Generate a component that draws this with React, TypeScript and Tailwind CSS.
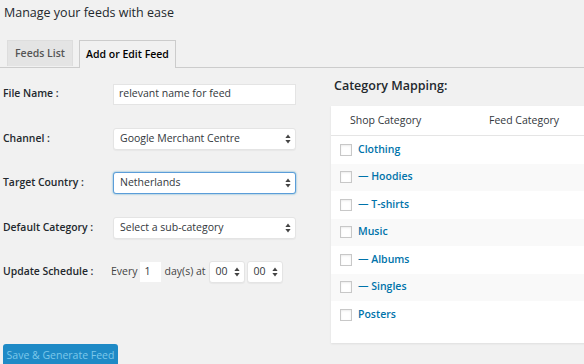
import React from "react"

const font = { fontFamily: '"Open Sans", "Liberation Sans", sans-serif' }

function Arrows() {
  return (
    <svg width="6" height="10" viewBox="0 0 6 10" className="shrink-0">
      <path d="M3 0.5 L5.6 4 L0.4 4 Z" fill="#444" />
      <path d="M3 9.5 L5.6 6 L0.4 6 Z" fill="#444" />
    </svg>
  )
}

function Select({ value, focused = false, className = "" }: { value: string; focused?: boolean; className?: string }) {
  return (
    <div
      className={
        "flex h-[22px] items-center justify-between rounded-[3px] bg-white pl-[6px] pr-[4px] text-[10.5px] text-[#32373c] " +
        (focused
          ? "border border-[#5b9dd9] shadow-[0_0_2px_rgba(30,140,190,0.8)] "
          : "border border-[#e4e4e4] shadow-[0_1px_1px_rgba(0,0,0,0.04)] ") +
        className
      }
    >
      <span>{value}</span>
      <Arrows />
    </div>
  )
}

function Row({ label, children }: { label: string; children: React.ReactNode }) {
  return (
    <div className="flex h-[22px] items-center">
      <div className="w-[113px] pl-[3px] text-[10.4px] font-semibold text-[#23282d]">{label}</div>
      {children}
    </div>
  )
}

const categories = [
  { name: "Clothing", sub: false },
  { name: "Hoodies", sub: true },
  { name: "T-shirts", sub: true },
  { name: "Music", sub: false },
  { name: "Albums", sub: true },
  { name: "Singles", sub: true },
  { name: "Posters", sub: false },
]

export default function App() {
  return (
    <div className="h-[364px] w-[584px] overflow-hidden bg-[#f1f1f1]" style={font}>
      <div className="pl-[4px] pt-[3px] text-[12.5px] leading-[20px] text-[#23282d]">Manage your feeds with ease</div>

      <div className="mt-[17px] flex items-end gap-[6px] border-b border-[#ccc] pl-[7px]">
        <div className="mb-[1px] flex h-[26px] w-[66px] items-center justify-center border border-b-0 border-[#ddd] bg-[#e4e4e4] text-[10.5px] font-semibold text-[#555]">
          Feeds List
        </div>
        <div className="-mb-px flex h-[28px] w-[97px] items-center justify-center border border-b-0 border-[#ccc] bg-[#f1f1f1] text-[10.5px] font-semibold text-[#000]">
          Add or Edit Feed
        </div>
      </div>

      <div className="flex">
        <div className="w-[331px] shrink-0">
          <div className="mt-[15px] flex flex-col gap-[22.5px]">
            <Row label="File Name :">
              <div className="flex h-[21px] w-[183px] items-center border border-[#e4e4e4] bg-white pl-[5px] text-[10.5px] text-[#32373c]">
                relevant name for feed
              </div>
            </Row>
            <Row label="Channel :">
              <Select value="Google Merchant Centre" className="w-[183px]" />
            </Row>
            <Row label="Target Country :">
              <Select value="Netherlands" focused className="w-[183px]" />
            </Row>
            <Row label="Default Category :">
              <Select value="Select a sub-category" className="w-[183px]" />
            </Row>
            <div className="flex h-[22px] items-center">
              <div className="w-[111px] pl-[3px] text-[10.4px] font-semibold text-[#23282d]">Update Schedule :</div>
              <span className="text-[10.5px] text-[#444]">Every</span>
              <div className="ml-[2px] flex h-[20px] w-[21px] items-center bg-white pl-[5px] text-[10.5px] text-[#32373c]">1</div>
              <span className="ml-[4px] text-[10.5px] text-[#444]">day(s) at</span>
              <Select value="00" className="ml-[3px] w-[36px]" />
              <Select value="00" className="ml-[2px] w-[36px]" />
            </div>
          </div>

          <div className="ml-[3px] mt-[61px] flex h-[24px] w-[115px] items-center justify-center rounded-[3px] bg-[#1e8ac6] text-[10.5px] text-[#7cc8ea]">
            Save &amp; Generate Feed
          </div>
        </div>

        <div className="flex-1">
          <div className="ml-[3px] mt-[8px] text-[12.5px] font-semibold leading-[20px] text-[#23282d]">Category Mapping:</div>
          <div className="mt-[10px] h-[237px] w-[270px] bg-white shadow-[0_1px_2px_rgba(0,0,0,0.08)]">
            <div className="flex h-[30px] items-center border-b border-[#e5e5e5] text-[10.5px] text-[#32373c]">
              <span className="w-[158px] pl-[19px]">Shop Category</span>
              <span>Feed Category</span>
            </div>
            {categories.map((c, i) => (
              <div
                key={c.name}
                className={"flex h-[27.5px] items-center pl-[9px] " + (i % 2 === 1 ? "bg-[#f9f9f9]" : "bg-white")}
              >
                <div className="h-[12px] w-[12px] border border-[#c8c8c8] bg-white shadow-[inset_0_1px_2px_rgba(0,0,0,0.08)]" />
                <span className="ml-[6px] text-[10.5px] font-semibold text-[#0073aa]">
                  {c.sub ? "— " : ""}
                  {c.name}
                </span>
              </div>
            ))}
          </div>
        </div>
      </div>
    </div>
  )
}
